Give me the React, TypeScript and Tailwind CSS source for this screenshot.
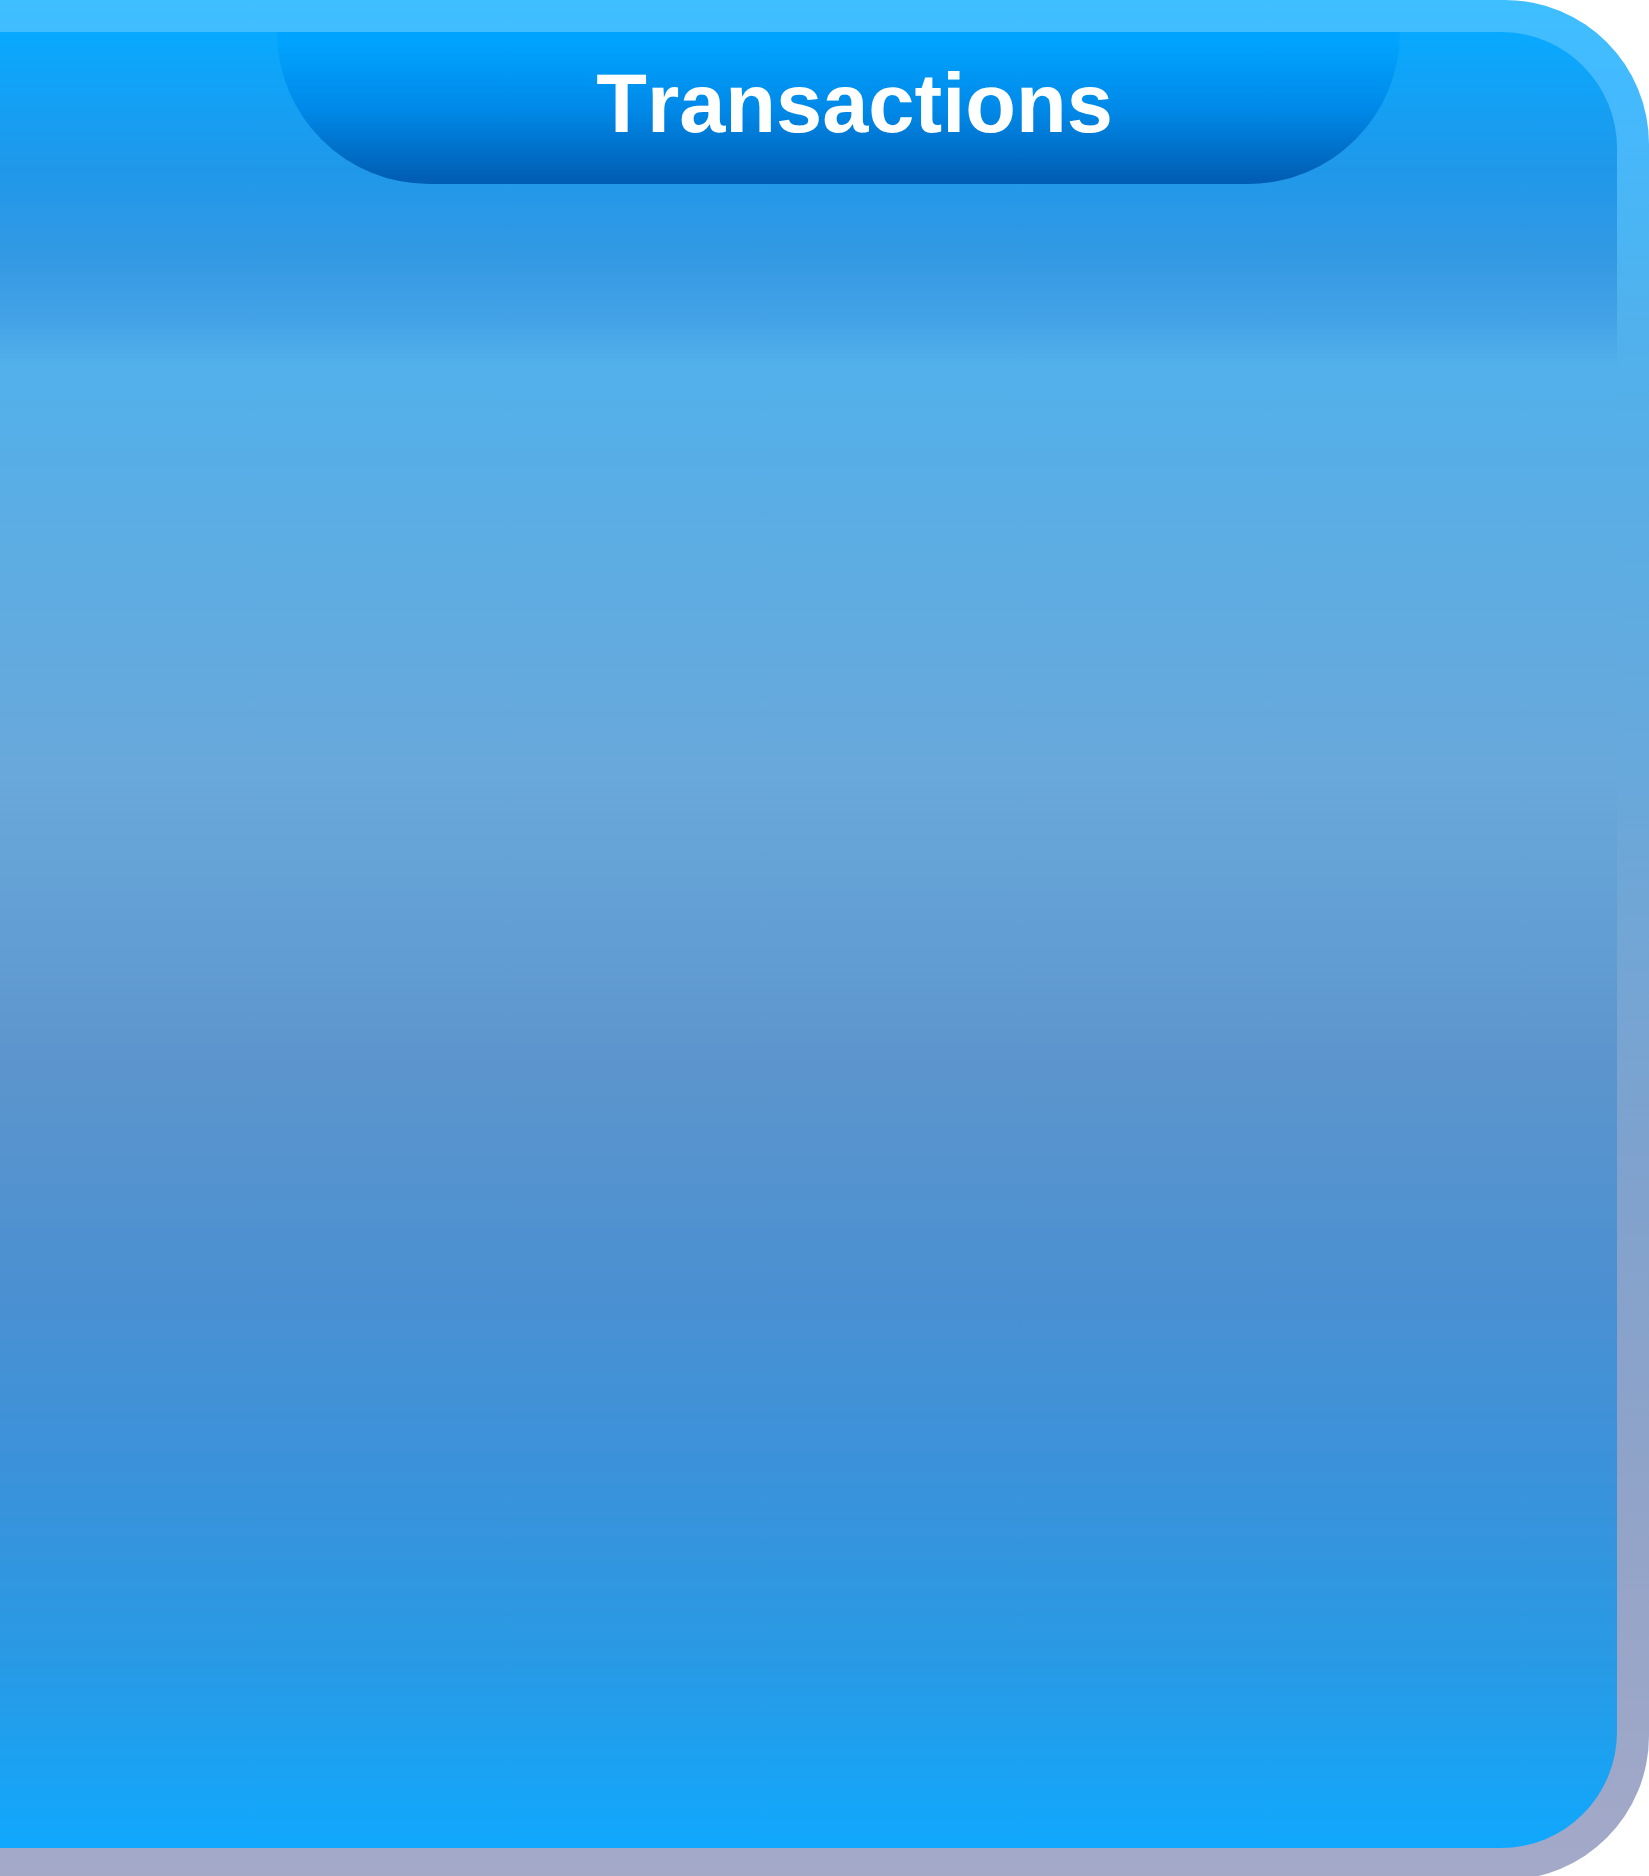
export default function App() {
  return (
    <main className="flex min-h-screen overflow-hidden bg-white font-['Liberation_Sans',Arial,sans-serif]">
      <section
        aria-labelledby="transactions-title"
        className="-mb-1 flex grow rounded-r-[144px] bg-[linear-gradient(to_bottom,#3ebfff_0%,#43baff_4%,#52b0ea_19.2%,#69a8da_42%,#7ea2ce_61%,#90a3c8_79%,#a4a9c8_100%)] py-8 pr-8"
      >
        <div className="grow rounded-r-[116px] bg-[linear-gradient(to_bottom,#08a9ff_0%,#1f98ea_7.5%,#3499e3_12.5%,#44a3e7_16%,#52b0ea_18.4%,#69a8da_41%,#5c95cd_57%,#4b90d1_69%,#3b92da_79%,#289ae5_90%,#10a8fd_100%)]">
          <header className="mr-[217px] ml-[277px] flex h-[152px] items-center justify-center rounded-b-[152px] bg-[linear-gradient(to_bottom,#00a4ff_6%,#0088e7_52%,#005fb5_96%)] pb-2 pl-8">
            <h1 id="transactions-title" className="text-[83px] leading-[96px] font-bold text-white [font-kerning:none]">
              Transactions
            </h1>
          </header>
        </div>
      </section>
    </main>
  );
}
